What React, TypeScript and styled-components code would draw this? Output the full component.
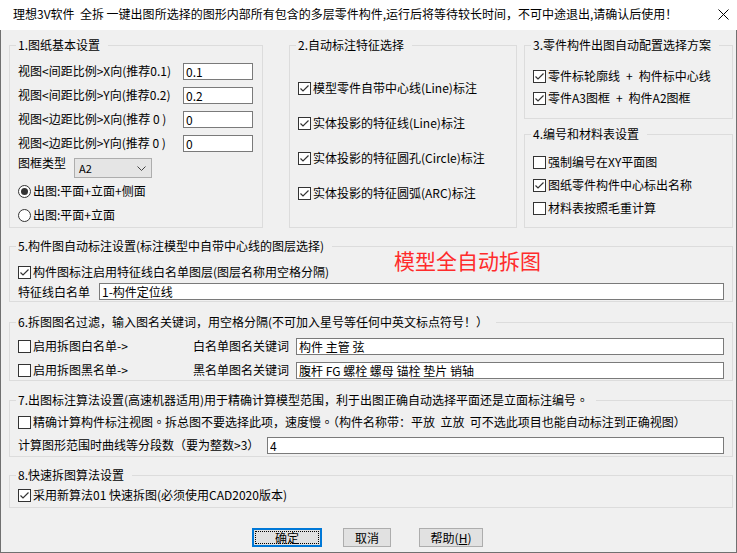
import React from 'react';
import styled, { createGlobalStyle, css } from 'styled-components';

const Global = createGlobalStyle`
  html, body { margin: 0; padding: 0; }
  body {
    width: 737px; height: 553px; overflow: hidden; background: #f0f0f0;
    font-family: "Noto Sans CJK SC", "Noto Sans", sans-serif; font-size: 12px; color: #000;
  }
  * { box-sizing: border-box; }
`;

const Window = styled.div`
  width: 737px; height: 553px; display: flex; flex-direction: column; background: #f0f0f0;
`;

const TitleBar = styled.div`
  height: 30px; flex: none; background: #fff; display: flex; align-items: center;
  padding: 0 8px 0 13px; white-space: pre; font-size: 12px;
`;

const TitleText = styled.span`
  flex: 1; line-height: 16px; margin-top: -2px; overflow: hidden;
`;

const Body = styled.div`
  flex: 1; display: flex; flex-direction: column;
  border-left: 1px solid #707070; border-right: 1px solid #707070; border-bottom: 1px solid #707070;
  padding: 7px 3px 0 8px;
`;

const TopRow = styled.div`
  display: flex; align-items: stretch;
`;

const Column = styled.div<{ $w: number }>`
  width: ${p => p.$w}px; display: flex; flex-direction: column; gap: 7px;
`;

const Group = styled.fieldset<{ $w?: number; $mr?: number; $mt?: number; $pt: number; $pb: number; $pr?: number; $grow?: boolean }>`
  margin: ${p => p.$mt ?? 0}px ${p => p.$mr ?? 0}px 0 0;
  ${p => p.$w && css`width: ${p.$w}px;`}
  ${p => p.$grow && css`flex: 1;`}
  min-width: 0;
  border: 1px solid #dcdcdc;
  padding: ${p => p.$pt}px ${p => p.$pr ?? 8}px ${p => p.$pb}px 8px;
`;

const Legend = styled.legend`
  margin-left: -2px; padding: 0 8px 0 2px; height: 16px; line-height: 16px; font-size: 12px; white-space: pre;
`;

const Stack = styled.div<{ $gap: number }>`
  display: flex; flex-direction: column; gap: ${p => p.$gap}px;
`;

const FieldRow = styled.div<{ $h?: number; $top?: boolean }>`
  display: flex; align-items: ${p => (p.$top ? 'flex-start' : 'center')}; justify-content: space-between;
  height: ${p => p.$h ?? 20}px; white-space: pre;
`;

const LabelText = styled.span<{ $lh?: number }>`
  line-height: ${p => p.$lh ?? 16}px; white-space: pre;
`;

const TextBox = styled.input<{ $w?: number }>`
  ${p => (p.$w ? css`width: ${p.$w}px;` : css`flex: 1; width: 100%;`)}
  height: 17px; margin: 0; border: 1px solid #7a7a7a; background: #fff; padding: 0 0 0 2px;
  font-family: "Noto Sans CJK SC", "Noto Sans", sans-serif; font-size: 12px; line-height: 15px; color: #000;
  outline: none;
`;

const SelectBox = styled.div`
  width: 78px; height: 20px; margin: 1px auto 0 8px; background: #e5e5e5; border: 1px solid #adadad;
  display: flex; align-items: center; justify-content: space-between; padding: 0 5px 0 4px;
  font-size: 11px;
`;

const CheckLabel = styled.label<{ $h?: number }>`
  display: flex; align-items: center; gap: 2px; height: ${p => p.$h ?? 20}px; white-space: pre; line-height: 16px;
`;

const CheckBoxSquare = styled.span`
  width: 13px; height: 13px; flex: none; border: 1px solid #333; background: #fff;
  display: flex; align-items: center; justify-content: center;
`;

const RadioCircle = styled.span`
  width: 13px; height: 13px; flex: none; border: 1px solid #333; border-radius: 50%; background: #fff;
  display: flex; align-items: center; justify-content: center;
`;

const RadioDot = styled.span`
  width: 7px; height: 7px; border-radius: 50%; background: #333;
`;

const RedTitle = styled.span`
  align-self: flex-start; margin-top: -13px; font-size: 21px; line-height: 21px; color: #ff2b2b; white-space: pre;
`;

const Row5 = styled.div`
  display: grid; grid-template-columns: 376px auto; align-items: center; height: 18px;
`;

const LabelInputRow = styled.div<{ $col: number; $h?: number }>`
  display: grid; grid-template-columns: ${p => p.$col}px 1fr; align-items: center; height: ${p => p.$h ?? 18}px;
`;

const KeywordGrid = styled.div`
  display: grid; grid-template-columns: 175px 103px 1fr; grid-auto-rows: 18px; row-gap: 6px; align-items: center;
`;

const CircleDot = styled.span`
  font-family: "Noto Sans CJK TC", sans-serif;
`;

const ButtonRow = styled.div`
  display: flex; margin-top: 20px; padding-left: 243px;
`;

const Button = styled.button<{ $w: number; $ml?: number; $default?: boolean }>`
  width: ${p => p.$w}px; height: 19px; margin: 0 0 0 ${p => p.$ml ?? 0}px; padding: 0;
  background: #e1e1e1; border: 1px solid #adadad; position: relative;
  font-family: "Noto Sans CJK SC", sans-serif; font-size: 12px; line-height: 15px; color: #000;
  ${p => p.$default && css`
    border: 2px solid #0078d7;
    &::after {
      content: ''; position: absolute; inset: 1px; border: 1px dotted #000;
    }
  `}
`;

const Mnemonic = styled.span`
  text-decoration: underline;
`;

const CheckMark = () => (
  <svg width="11" height="11" viewBox="0 0 11 11">
    <path d="M1.5 5.5 L4 8 L9.5 2.5" fill="none" stroke="#333" strokeWidth="1.2" />
  </svg>
);

function CheckItem({ checked, children, h }: { checked?: boolean; children: React.ReactNode; h?: number }) {
  return (
    <CheckLabel $h={h}>
      <CheckBoxSquare>{checked && <CheckMark />}</CheckBoxSquare>
      <span>{children}</span>
    </CheckLabel>
  );
}

function RadioItem({ checked, children }: { checked?: boolean; children: React.ReactNode }) {
  return (
    <CheckLabel>
      <RadioCircle>{checked && <RadioDot />}</RadioCircle>
      <span>{children}</span>
    </CheckLabel>
  );
}

const scaleRows = [
  { label: '视图<间距比例>X向(推荐0.1)', value: '0.1' },
  { label: '视图<间距比例>Y向(推荐0.2)', value: '0.2' },
  { label: '视图<边距比例>X向(推荐 0 )', value: '0' },
  { label: '视图<边距比例>Y向(推荐 0 )', value: '0' },
];

const featureRows = [
  '模型零件自带中心线(Line)标注',
  '实体投影的特征线(Line)标注',
  '实体投影的特征圆孔(Circle)标注',
  '实体投影的特征圆弧(ARC)标注',
];

const sp = '\u2002+\u2002';

export default function App() {
  return (
    <>
      <Global />
      <Window>
        <TitleBar>
          <TitleText>理想3V软件  全拆 一键出图所选择的图形内部所有包含的多层零件构件,运行后将等待较长时间，不可中途退出,请确认后使用！</TitleText>
          <svg width="11" height="11" viewBox="0 0 11 11" style={{ marginTop: -2 }}>
            <path d="M0.5 0.5 L10.5 10.5 M10.5 0.5 L0.5 10.5" stroke="#000" strokeWidth="1" />
          </svg>
        </TitleBar>
        <Body>
          <TopRow>
            <Group $w={254} $mr={26} $pt={8} $pb={2} $pr={9}>
              <Legend>1.图纸基本设置</Legend>
              <Stack $gap={4}>
                {scaleRows.map(r => (
                  <FieldRow key={r.label}>
                    <LabelText>{r.label}</LabelText>
                    <TextBox $w={70} readOnly value={r.value} />
                  </FieldRow>
                ))}
                <FieldRow $top>
                  <LabelText $lh={12}>图框类型</LabelText>
                  <SelectBox>
                    <span>A2</span>
                    <svg width="9" height="5" viewBox="0 0 9 5">
                      <path d="M0.5 0.5 L4.5 4.5 L8.5 0.5" fill="none" stroke="#444" strokeWidth="1" />
                    </svg>
                  </SelectBox>
                </FieldRow>
                <RadioItem checked>出图:平面+立面+侧面</RadioItem>
                <RadioItem>出图:平面+立面</RadioItem>
              </Stack>
            </Group>
            <Group $w={228} $mr={7} $pt={25} $pb={0}>
              <Legend>2.自动标注特征选择</Legend>
              <Stack $gap={15}>
                {featureRows.map(t => (
                  <CheckItem key={t} checked>{t}</CheckItem>
                ))}
              </Stack>
            </Group>
            <Column $w={209}>
              <Group $pt={13} $pb={10}>
                <Legend>3.零件构件出图自动配置选择方案</Legend>
                <Stack $gap={2}>
                  <CheckItem checked>{`零件标轮廓线${sp}构件标中心线`}</CheckItem>
                  <CheckItem checked>{`零件A3图框${sp}构件A2图框`}</CheckItem>
                </Stack>
              </Group>
              <Group $pt={10} $pb={0} $grow>
                <Legend>4.编号和材料表设置</Legend>
                <Stack $gap={3}>
                  <CheckItem>强制编号在XY平面图</CheckItem>
                  <CheckItem checked>图纸零件构件中心标出名称</CheckItem>
                  <CheckItem>材料表按照毛重计算</CheckItem>
                </Stack>
              </Group>
            </Column>
          </TopRow>

          <Group $mt={10} $pt={9} $pb={1}>
            <Legend>5.构件图自动标注设置(标注模型中自带中心线的图层选择)</Legend>
            <Stack $gap={2}>
              <Row5>
                <CheckItem checked h={18}>构件图标注启用特征线白名单图层(图层名称用空格分隔)</CheckItem>
                <RedTitle>模型全自动拆图</RedTitle>
              </Row5>
              <LabelInputRow $col={81} $h={17}>
                <LabelText>特征线白名单</LabelText>
                <TextBox readOnly value="1-构件定位线" />
              </LabelInputRow>
            </Stack>
          </Group>

          <Group $mt={12} $pt={7} $pb={1}>
            <Legend>6.拆图图名过滤，输入图名关键词，用空格分隔(不可加入星号等任何中英文标点符号！）</Legend>
            <KeywordGrid>
              <CheckItem h={18}>启用拆图白名单-&gt;</CheckItem>
              <LabelText>白名单图名关键词</LabelText>
              <TextBox readOnly value="构件 主管 弦" />
              <CheckItem h={18}>启用拆图黑名单-&gt;</CheckItem>
              <LabelText>黑名单图名关键词</LabelText>
              <TextBox readOnly value="腹杆 FG 螺栓 螺母 锚栓 垫片 销轴" />
            </KeywordGrid>
          </Group>

          <Group $mt={11} $pt={5} $pb={2}>
            <Legend>
              7.出图标注算法设置(高速机器适用)用于精确计算模型范围，利于出图正确自动选择平面还是立面标注编号<CircleDot>。</CircleDot>
            </Legend>
            <Stack $gap={5}>
              <CheckItem h={18}>
                精确计算构件标注视图<CircleDot>。</CircleDot>拆总图不要选择此项，速度慢<CircleDot>。</CircleDot>（构件名称带：平放  立放  可不选此项目也能自动标注到正确视图）
              </CheckItem>
              <LabelInputRow $col={249}>
                <LabelText>计算图形范围时曲线等分段数（要为整数&gt;3）</LabelText>
                <TextBox readOnly value="4" />
              </LabelInputRow>
            </Stack>
          </Group>

          <Group $mt={10} $pt={3} $pb={3}>
            <Legend>8.快速拆图算法设置</Legend>
            <CheckItem checked h={18}>采用新算法01 快速拆图(必须使用CAD2020版本)</CheckItem>
          </Group>

          <ButtonRow>
            <Button $w={70} $default>确定</Button>
            <Button $w={48} $ml={21}>取消</Button>
            <Button $w={64} $ml={28}>帮助(<Mnemonic>H</Mnemonic>)</Button>
          </ButtonRow>
        </Body>
      </Window>
    </>
  );
}
